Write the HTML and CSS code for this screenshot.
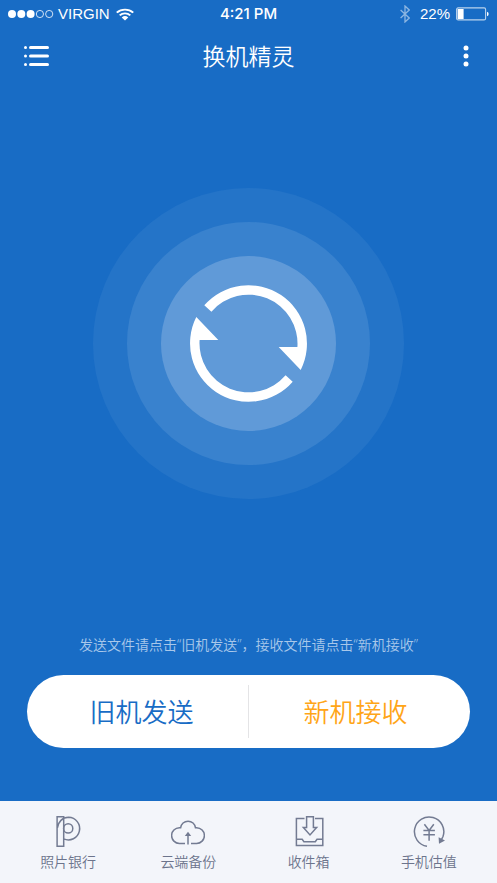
FILE: index.html
```html
<!DOCTYPE html>
<html lang="zh-CN">
<head>
<meta charset="utf-8">
<meta name="viewport" content="width=device-width, initial-scale=1">
<title>换机精灵</title>
<link rel="stylesheet" href="styles.css">
</head>
<body>
<div class="app">
  <div class="status">
    <div class="status-side">
      <svg class="signal" width="46" height="10" viewBox="0 0 46 10" aria-hidden="true">
        <g fill="#fff"><circle cx="4" cy="5" r="4"/><circle cx="13.3" cy="5" r="4"/><circle cx="22.6" cy="5" r="4"/></g>
        <g fill="none" stroke="#fff" stroke-width=".8"><circle cx="31.9" cy="5" r="3.6"/><circle cx="41.2" cy="5" r="3.6"/></g>
      </svg>
      <span>VIRGIN</span>
      <svg width="18" height="13" viewBox="0 0 16 13" preserveAspectRatio="none" aria-hidden="true">
        <g fill="none" stroke="#fff" stroke-width="1.8"><path d="M.7 4.6a10.4 10.4 0 0 1 14.6 0"/><path d="M3.3 7.4a6.7 6.7 0 0 1 9.4 0"/></g>
        <path fill="#fff" d="M8 12.4 5.1 9.4a4.1 4.1 0 0 1 5.8 0z"/>
      </svg>
    </div>
    <time class="clock">4:21 PM</time>
    <div class="status-side status-right">
      <svg class="bluetooth" width="10" height="18" viewBox="0 0 10 18" aria-hidden="true"><path fill="none" stroke="#fff" stroke-width="1.3" d="M.6 5l8.6 8L5 17V1l4.2 4L.6 13"/></svg>
      <span>22%</span>
      <svg width="33" height="14" viewBox="0 0 33 14" aria-hidden="true">
        <rect x=".6" y=".9" width="29" height="12" rx="1.5" fill="none" stroke="#fff" stroke-opacity=".7" stroke-width="1.1"/>
        <rect x="1.6" y="2" width="6" height="10" fill="#fff"/>
        <path fill="#fff" d="M31 4.8a2.3 2.3 0 0 1 0 4.4z"/>
      </svg>
    </div>
  </div>

  <header class="header">
    <button class="icon-button" type="button" aria-label="菜单">
      <svg width="26" height="20" viewBox="0 0 26 20">
        <g fill="#fff"><circle cx="1.5" cy="1.5" r="1.5"/><circle cx="1.5" cy="10" r="1.5"/><circle cx="1.5" cy="18.5" r="1.5"/>
        <rect x="5" y="0" width="20" height="3" rx="1.5"/><rect x="5" y="8.5" width="20" height="3" rx="1.5"/><rect x="5" y="17" width="20" height="3" rx="1.5"/></g>
      </svg>
    </button>
    <h1 class="title">换机精灵</h1>
    <button class="icon-button more" type="button" aria-label="更多">
      <svg width="6" height="22" viewBox="0 0 6 22"><g fill="#fff"><circle cx="3" cy="3" r="2.5"/><circle cx="3" cy="11" r="2.5"/><circle cx="3" cy="19" r="2.5"/></g></svg>
    </button>
  </header>

  <main class="main">
    <div class="stage">
      <div class="ring ring-outer"><div class="ring ring-middle"><div class="ring ring-inner">
        <svg width="117" height="117" viewBox="0 0 117 117" aria-hidden="true">
          <g fill="#fff">
            <path d="M14.3 20.3A58.5 58.5 0 0 1 110.7 85L88.7 62H107.4A49 49 0 0 0 21.4 26.7z"/>
            <path transform="rotate(180 58.5 58.5)" d="M14.3 20.3A58.5 58.5 0 0 1 110.7 85L88.7 62H107.4A49 49 0 0 0 21.4 26.7z"/>
          </g>
        </svg>
      </div></div></div>
    </div>
    <p class="hint">发送文件请点击“旧机发送”，接收文件请点击“新机接收”</p>
    <div class="actions">
      <button class="action send" type="button">旧机发送</button>
      <span class="divider"></span>
      <button class="action receive" type="button">新机接收</button>
    </div>
  </main>

  <nav class="tabs">
    <a class="tab" href="#photos">
      <svg width="34" height="32" viewBox="0 0 34 32"><path d="M6.1.8h6.6v29.5H6.1z M6.4 12C7 6 11.5 1.3 17.6 1.3a11.3 11.3 0 1 1-4.9 21.6"/><circle cx="17.2" cy="12.4" r="4.6"/></svg>
      照片银行
    </a>
    <a class="tab" href="#cloud">
      <svg width="34" height="32" viewBox="0 0 34 32"><path d="M14 27.4H8.4a7.6 7.6 0 0 1 0-15.6h1.2a7.5 7.5 0 0 1 14.9 0h1.1a7.6 7.6 0 0 1 0 15.6H20"/><path d="M17 28.5V19"/><path class="solid" d="M13.8 20l3.2-4.2 3.2 4.2z"/></svg>
      云端备份
    </a>
    <a class="tab" href="#inbox">
      <svg width="34" height="32" viewBox="0 0 34 32"><path d="M12.5 2.6H4.4v27h26.4v-27h-7.8M4.4 23.3h5.8l1.7 2.4h11.4l1.7-2.4h5.8"/><path d="M14.6.8h6.8v10.8h3.2L18 18.9l-6.6-7.3h3.2z"/></svg>
      收件箱
    </a>
    <a class="tab" href="#value">
      <svg width="34" height="32" viewBox="0 0 34 32"><path d="M15 30.2A14.7 14.7 0 1 1 31 20.5l-1.5 3"/><path d="M12.4 8.3l4.7 6.2 4.7-6.2M17.1 14.5v10.3M11.4 14.5h11.5M11.4 18.7h11.5"/><path class="solid" d="M26.6 21.2l6.4 3.4-6 3.2z"/></svg>
      手机估值
    </a>
  </nav>
</div>
</body>
</html>
```

FILE: styles.css
```css
* { box-sizing: border-box; }

body {
  margin: 0;
  background: #186cc5;
  font-family: "Liberation Sans", "Noto Sans CJK SC", sans-serif;
  color: #fff;
}

button {
  padding: 0;
  border: 0;
  background: none;
  color: inherit;
  font: inherit;
  cursor: pointer;
}

svg { display: block; }

.app {
  display: flex;
  flex-direction: column;
  min-height: 100vh;
}

.status {
  display: flex;
  align-items: center;
  height: 28px;
  padding: 0 8px;
  font-size: 15px;
  line-height: 20px;
}

.status-side {
  display: flex;
  flex: 1;
  align-items: center;
  gap: 6px;
}

.status-side .signal { margin-right: -2px; }
.status-right { justify-content: flex-end; }
.bluetooth { opacity: .5; margin-right: 4px; }

.clock {
  font-family: Inter, "Liberation Sans", sans-serif;
  font-weight: 500;
}

.header {
  display: grid;
  grid-template-columns: 1fr auto 1fr;
  align-items: center;
  height: 56px;
  padding: 0 16px;
}

.icon-button {
  display: flex;
  align-items: center;
  justify-content: center;
  width: 42px;
  height: 40px;
}

.icon-button.more {
  justify-self: end;
  width: 30px;
}

.title {
  margin: 0;
  padding-bottom: 3px;
  text-align: center;
  font: 350 23px/32px "Noto Sans CJK SC", sans-serif;
}

.main {
  display: flex;
  flex: 1;
  flex-direction: column;
}

.stage {
  display: flex;
  flex: 1;
  align-items: center;
  justify-content: center;
}

.ring {
  display: flex;
  align-items: center;
  justify-content: center;
  flex: none;
  border-radius: 50%;
}

.ring-outer { width: 311px; height: 311px; background: #2474c8; }
.ring-middle { width: 243px; height: 243px; background: #3982ce; }
.ring-inner { width: 175px; height: 175px; background: #609ad8; }

.hint {
  margin: 32px 16px 20px;
  text-align: center;
  font: 350 14px/20px "Open Sans", "Noto Sans CJK SC", sans-serif;
  text-spacing-trim: space-all;
  color: #a9c8ea;
}

.actions {
  display: flex;
  align-items: center;
  height: 73px;
  margin: 0 27px 53px;
  padding: 0 8px;
  border-radius: 37px;
  background: #fff;
}

.action {
  flex: 1;
  height: 100%;
  padding-bottom: 2px;
  font: 350 26px/40px "Noto Sans CJK SC", sans-serif;
}

.send { color: #186cc5; }
.receive { color: #ffa517; }

.divider {
  width: 1px;
  height: 53px;
  background: #e4e4e6;
}

.tabs {
  display: flex;
  height: 82px;
  padding: 15px 8px 0;
  background: #f3f5fa;
}

.tab {
  display: flex;
  flex: 1;
  flex-direction: column;
  align-items: center;
  gap: 3px;
  font: 350 14px/20px "Noto Sans CJK SC", sans-serif;
  color: #6c748c;
  text-decoration: none;
}

.tab svg {
  fill: none;
  stroke: #737b92;
  stroke-width: 1.5;
}

.tab .solid { fill: #737b92; stroke: none; }
```
